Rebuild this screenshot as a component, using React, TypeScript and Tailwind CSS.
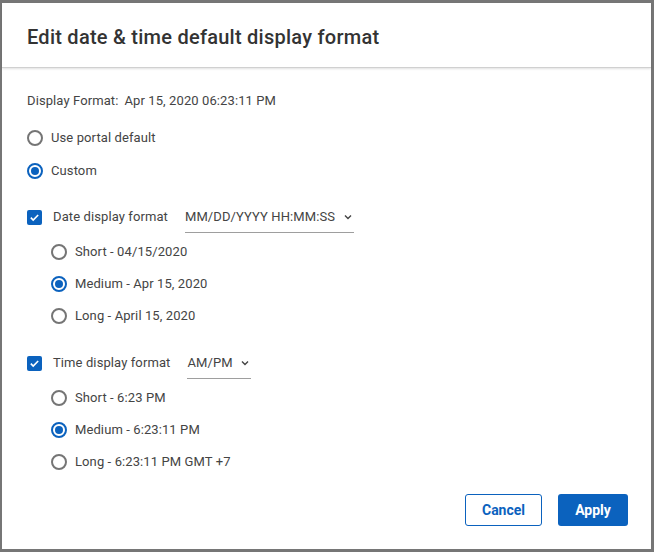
import React from "react";

const font = { fontFamily: "Roboto, 'Liberation Sans', sans-serif" };

function Radio({ checked, label }: { checked?: boolean; label: string }) {
    return (
        <div className="flex items-center h-8">
            <span
                className={`w-4 h-4 rounded-full border-2 flex items-center justify-center ${checked ? "border-[#0b62be]" : "border-[#757575]"}`}
            >
                {checked && <span className="w-2 h-2 rounded-full bg-[#0b62be]" />}
            </span>
            <span className="ml-2 text-[13px] tracking-[0.1px] text-[#444]">{label}</span>
        </div>
    );
}

function Check({ label }: { label: string }) {
    return (
        <div className="flex items-center">
            <span className="w-[15px] h-[15px] rounded-[2px] bg-[#0b62be] flex items-center justify-center">
                <svg width="11" height="11" viewBox="0 0 12 12" fill="none">
                    <path d="M2 6.2l2.6 2.6L10 3.3" stroke="white" strokeWidth="1.8" />
                </svg>
            </span>
            <span className="ml-[11px] text-[13px] tracking-[0.1px] text-[#444]">{label}</span>
        </div>
    );
}

function Select({ value, width }: { value: string; width: string }) {
    return (
        <div className={`ml-[17px] h-8 border-b border-[#9e9e9e] flex items-center justify-between ${width}`}>
            <span className="text-[13px] tracking-[0.1px] text-[#444]">{value}</span>
            <svg width="8" height="6" viewBox="0 0 8 6" fill="none" className="mr-[2px]">
                <path d="M1 1.5l3 3 3-3" stroke="#444" strokeWidth="1.4" />
            </svg>
        </div>
    );
}

export default function App() {
    return (
        <div className="w-[654px] h-[552px] bg-[#767676] pt-[3px] pl-[2px] pr-[3px] pb-[3px]" style={font}>
            <div className="bg-white h-full flex flex-col">
                <div className="h-[65px] pt-[3px] flex items-center px-[25px] border-b border-[#d0d0d0] shadow-[0_1px_2px_rgba(0,0,0,0.12)]">
                    <h1 className="text-[20px] tracking-[0.25px] font-medium text-[#333]">Edit date &amp; time default display format</h1>
                </div>

                <div className="px-[25px] pt-[25px] flex flex-col">
                    <div className="h-4 flex items-center text-[13px] tracking-[0.1px] text-[#444]">
                        <span>Display Format:</span>
                        <span className="ml-[6px]">Apr 15, 2020 06:23:11 PM</span>
                    </div>

                    <div className="mt-[13px]">
                        <Radio label="Use portal default" />
                    </div>
                    <div className="mt-[1px]">
                        <Radio checked label="Custom" />
                    </div>

                    <div className="mt-[14px] flex items-center">
                        <Check label="Date display format" />
                        <Select value="MM/DD/YYYY HH:MM:SS" width="w-[169px]" />
                    </div>
                    <div className="mt-[3px] pl-6 flex flex-col">
                        <Radio label="Short - 04/15/2020" />
                        <Radio checked label="Medium - Apr 15, 2020" />
                        <Radio label="Long - April 15, 2020" />
                    </div>

                    <div className="mt-[15px] flex items-center">
                        <Check label="Time display format" />
                        <Select value="AM/PM" width="w-[64px]" />
                    </div>
                    <div className="mt-[3px] pl-6 flex flex-col">
                        <Radio label="Short - 6:23 PM" />
                        <Radio checked label="Medium - 6:23:11 PM" />
                        <Radio label="Long - 6:23:11 PM GMT +7" />
                    </div>
                </div>

                <div className="mt-[16px] pr-[23px] flex justify-end gap-4">
                    <button className="w-[77px] h-8 rounded-[3px] border border-[#0b62be] text-[#0b62be] text-[14px] font-bold">
                        Cancel
                    </button>
                    <button className="w-[70px] h-8 rounded-[3px] bg-[#0b62be] text-white text-[14px] font-bold">
                        Apply
                    </button>
                </div>
            </div>
        </div>
    );
}
